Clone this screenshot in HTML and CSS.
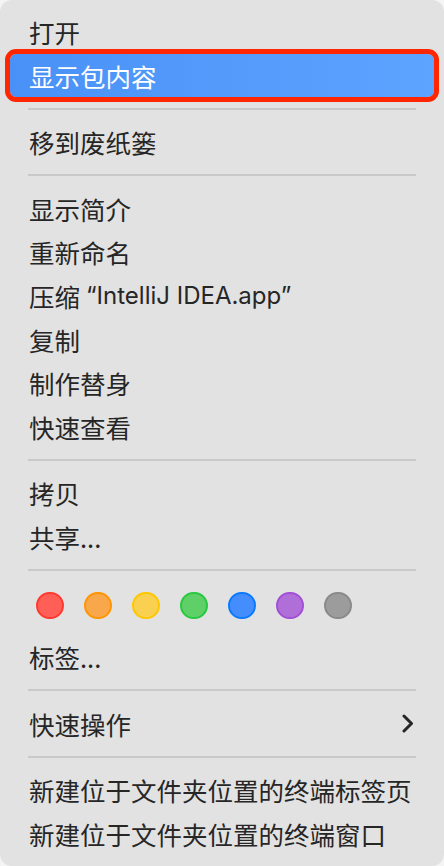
FILE: index.html
```html
<!DOCTYPE html>
<html lang="zh-CN">
<head>
    <meta charset="UTF-8">
    <meta name="viewport" content="width=device-width, initial-scale=1.0">
    <title>Finder 菜单</title>
    <link rel="stylesheet" href="styles.css">
</head>
<body>
    <div class="menu">
        <div class="item">打开</div>
        <div class="item active">显示包内容</div>
        <div class="sep"></div>
        <div class="item">移到废纸篓</div>
        <div class="sep"></div>
        <div class="item">显示简介</div>
        <div class="item">重新命名</div>
        <div class="item">压缩 <span class="latin">“IntelliJ IDEA.app”</span></div>
        <div class="item">复制</div>
        <div class="item">制作替身</div>
        <div class="item">快速查看</div>
        <div class="sep"></div>
        <div class="item">拷贝</div>
        <div class="item">共享...</div>
        <div class="sep"></div>
        <div class="tags">
            <span class="dot red"></span>
            <span class="dot orange"></span>
            <span class="dot yellow"></span>
            <span class="dot green"></span>
            <span class="dot blue"></span>
            <span class="dot purple"></span>
            <span class="dot gray"></span>
        </div>
        <div class="item">标签...</div>
        <div class="sep"></div>
        <div class="item submenu">
            快速操作
            <!-- chevron -->
            <svg class="chevron" width="12" height="19" viewBox="0 0 12 19">
                <path d="M2 2 L9.5 9.5 L2 17" fill="none" stroke="#262626" stroke-width="3" stroke-linecap="round" stroke-linejoin="round"/>
            </svg>
        </div>
        <div class="sep"></div>
        <div class="item">新建位于文件夹位置的终端标签页</div>
        <div class="item">新建位于文件夹位置的终端窗口</div>
    </div>
</body>
</html>
```

FILE: styles.css
```css
body {
    margin: 0;
    padding: 0;
    background-color: #f4f4f4;
    font-family: "Noto Sans CJK SC", sans-serif;
}
.menu {
    width: 444px;
    height: 866px;
    box-sizing: border-box;
    padding: 10px 0;
    background-color: #e2e2e2;
    border-radius: 12px;
    color: #262626;
    font-size: 25.5px;
}
.item {
    height: 43.6px;
    line-height: 43.6px;
    padding: 0 19px;
    margin: 0 10px;
    border-radius: 6px;
    display: flex;
    align-items: center;
    white-space: nowrap;
}
.item.active {
    background: linear-gradient(90deg, #4a91f7, #5ca4ff);
    color: #ffffff;
    outline: 5px solid #ff2600;
    outline-offset: 0;
}
.latin {
    font-family: "Inter", "Noto Sans CJK SC", sans-serif;
    font-size: 24px;
    margin-left: 6px;
}
.submenu {
    justify-content: space-between;
    padding-right: 20px;
}
.sep {
    height: 2px;
    margin: 10.5px 28px;
    background-color: #c9c9c9;
}
.tags {
    display: flex;
    gap: 20.5px;
    padding: 10px 0 0 36px;
    height: 53.4px;
    box-sizing: border-box;
}
.dot {
    width: 27.5px;
    height: 27.5px;
    box-sizing: border-box;
    border-radius: 50%;
    border: 2px solid;
}
.red { background-color: #ff5f57; border-color: #ff3b30; }
.orange { background-color: #f8a74a; border-color: #ff9500; }
.yellow { background-color: #f9d04f; border-color: #ffc700; }
.green { background-color: #5fd068; border-color: #28c840; }
.blue { background-color: #448dfd; border-color: #0a7aff; }
.purple { background-color: #b06fd8; border-color: #a24fd6; }
.gray { background-color: #9c9c9c; border-color: #8a8a8a; }
```
